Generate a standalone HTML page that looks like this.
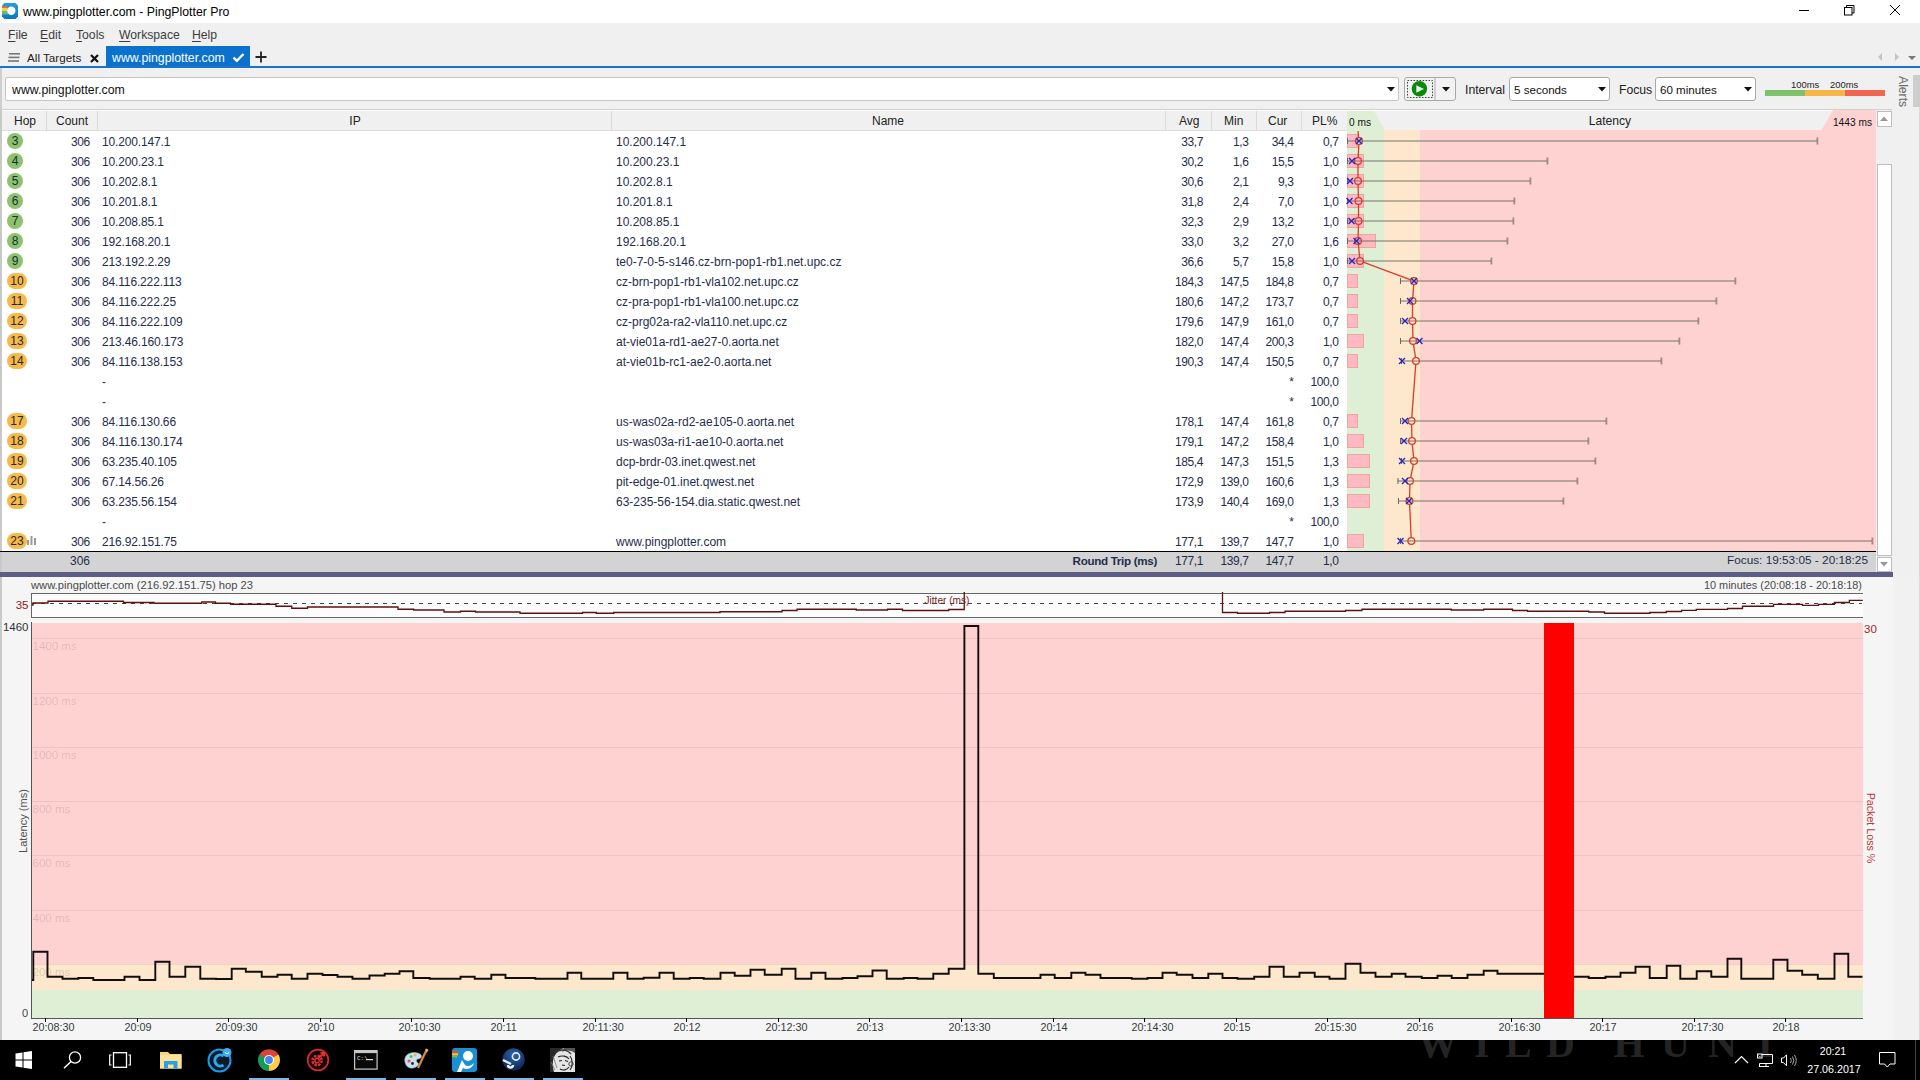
<!DOCTYPE html><html><head><meta charset="utf-8"><style>
html,body{margin:0;padding:0;width:1920px;height:1080px;overflow:hidden;background:#f0f0f0;font-family:"Liberation Sans", sans-serif;}
u{text-decoration:underline;text-underline-offset:2px}
</style></head><body>
<div style="position:absolute;left:0px;top:0px;width:1920px;height:23px;background:#fff"></div>
<svg style="position:absolute;left:2px;top:3px" width="16" height="16" viewBox="0 0 16 16">
<defs><linearGradient id="icg" x1="0" y1="0" x2="0" y2="1"><stop offset="0" stop-color="#1ea0e6"/><stop offset="1" stop-color="#0a76bf"/></linearGradient></defs>
<path d="M2.5 0 H13.5 L16 2.5 V13.5 L13.5 16 H2.5 L0 13.5 V2.5 Z" fill="url(#icg)"/>
<path d="M0 3 H6 L5.5 5 H0 Z" fill="#e2702e"/><path d="M0 5 H5.5 L5.3 8.5 H0 Z" fill="#f2d22e"/><path d="M0 8.5 H5.3 L6.5 11.5 H0 Z" fill="#5cbf84"/>
<circle cx="9.3" cy="7.7" r="4.2" fill="#fff"/>
</svg>
<div style="position:absolute;left:23px;top:5px;font-size:12.3px;line-height:14.3px;color:#000;white-space:nowrap;">www.pingplotter.com - PingPlotter Pro</div>
<div style="position:absolute;left:1799px;top:10px;width:10px;height:1px;background:#000"></div>
<svg style="position:absolute;left:1844px;top:5px" width="11" height="11" viewBox="0 0 11 11">
<rect x="0.5" y="2.5" width="7.5" height="7.5" fill="none" stroke="#000" stroke-width="1"/>
<path d="M2.5 2.5 V0.5 H10 V8 H8" fill="none" stroke="#000" stroke-width="1"/></svg>
<svg style="position:absolute;left:1890px;top:5px" width="10" height="10" viewBox="0 0 10 10">
<path d="M0 0 L10 10 M10 0 L0 10" stroke="#000" stroke-width="1"/></svg>
<div style="position:absolute;left:0px;top:23px;width:1920px;height:45px;background:#f0f0f0"></div>
<div style="position:absolute;left:8px;top:28px;font-size:12.2px;line-height:14.2px;color:#3c3c3c;white-space:nowrap;"><u>F</u>ile</div>
<div style="position:absolute;left:40px;top:28px;font-size:12.2px;line-height:14.2px;color:#3c3c3c;white-space:nowrap;"><u>E</u>dit</div>
<div style="position:absolute;left:76px;top:28px;font-size:12.2px;line-height:14.2px;color:#3c3c3c;white-space:nowrap;"><u>T</u>ools</div>
<div style="position:absolute;left:119px;top:28px;font-size:12.2px;line-height:14.2px;color:#3c3c3c;white-space:nowrap;"><u>W</u>orkspace</div>
<div style="position:absolute;left:192px;top:28px;font-size:12.2px;line-height:14.2px;color:#3c3c3c;white-space:nowrap;"><u>H</u>elp</div>
<svg style="position:absolute;left:8px;top:53px" width="13" height="10" viewBox="0 0 13 10">
<rect x="1" y="0" width="11" height="1.6" fill="#777"/><rect x="0.5" y="3.6" width="11" height="1.6" fill="#777"/><rect x="0" y="7.2" width="11" height="1.6" fill="#777"/></svg>
<div style="position:absolute;left:27px;top:51px;font-size:11.7px;line-height:13.7px;color:#222;white-space:nowrap;">All Targets</div>
<svg style="position:absolute;left:90px;top:54px" width="9" height="9" viewBox="0 0 9 9">
<path d="M1 1 L8 8 M8 1 L1 8" stroke="#111" stroke-width="2.2"/></svg>
<div style="position:absolute;left:106px;top:46px;width:144px;height:20px;background:#0a72cc"></div>
<div style="position:absolute;left:112px;top:51px;font-size:12.3px;line-height:14.3px;color:#fff;white-space:nowrap;">www.pingplotter.com</div>
<svg style="position:absolute;left:232px;top:52px" width="13" height="11" viewBox="0 0 13 11">
<path d="M1.5 5.5 L4.8 8.8 L11.5 2" fill="none" stroke="#fff" stroke-width="2.4"/></svg>
<svg style="position:absolute;left:255px;top:51px" width="12" height="12" viewBox="0 0 12 12">
<path d="M6 0.5 V11.5 M0.5 6 H11.5" stroke="#222" stroke-width="1.8"/></svg>
<div style="position:absolute;left:0px;top:66px;width:1920px;height:2px;background:#1a73c8"></div>
<svg style="position:absolute;left:1876px;top:52px" width="44" height="10" viewBox="0 0 44 10">
<path d="M6 1 L2 5 L6 9 Z" fill="#c4c4c4"/><path d="M19 1 L23 5 L19 9 Z" fill="#c4c4c4"/>
<path d="M32 4 L40 4 L36 8 Z" fill="#777"/></svg>
<div style="position:absolute;left:0px;top:68px;width:1920px;height:42px;background:#f0f0f0"></div>
<div style="position:absolute;left:5px;top:77px;width:1394px;height:24px;background:#fff;border:1px solid #c5c5c5;box-sizing:border-box;border-radius:2px"></div>
<div style="position:absolute;left:12px;top:83px;font-size:12.3px;line-height:14.3px;color:#111;white-space:nowrap;">www.pingplotter.com</div>
<div style="position:absolute;left:0px;top:68px;width:2px;height:42px;background:#cfcfcf"></div>
<svg style="position:absolute;left:1387px;top:87px" width="9" height="5" viewBox="0 0 9 5"><path d="M0 0 H8 L4 4.5 Z" fill="#111"/></svg>
<div style="position:absolute;left:1404px;top:77px;width:52px;height:24px;background:#f2f2f2;border:1px solid #a8a8a8;box-sizing:border-box;border-radius:3px"></div>
<div style="position:absolute;left:1434px;top:78px;width:2px;height:22px;background:#cfcfcf"></div>
<svg style="position:absolute;left:1404px;top:77px" width="32" height="24" viewBox="0 0 32 24">
<rect x="3.5" y="3.5" width="25" height="17" fill="none" stroke="#444" stroke-width="1" stroke-dasharray="1.6 1.4"/>
<circle cx="15.4" cy="11.7" r="7.7" fill="#0a8a0a"/>
<path d="M12.3 8.2 L20 11.9 L12.3 15.7 Z" fill="#e6f6e6"/></svg>
<svg style="position:absolute;left:1442px;top:87px" width="9" height="5" viewBox="0 0 9 5"><path d="M0 0 H8 L4 4.5 Z" fill="#111"/></svg>
<div style="position:absolute;left:1465px;top:83px;font-size:12.2px;line-height:14.2px;color:#222;white-space:nowrap;">Interval</div>
<div style="position:absolute;left:1509px;top:77px;width:101px;height:24px;background:#fff;border:1px solid #a8a8a8;box-sizing:border-box;border-radius:3px"></div>
<div style="position:absolute;left:1514px;top:83px;font-size:11.6px;line-height:13.6px;color:#111;white-space:nowrap;">5 seconds</div>
<svg style="position:absolute;left:1598px;top:87px" width="9" height="5" viewBox="0 0 9 5"><path d="M0 0 H8 L4 4.5 Z" fill="#111"/></svg>
<div style="position:absolute;left:1619px;top:83px;font-size:12.2px;line-height:14.2px;color:#222;white-space:nowrap;">Focus</div>
<div style="position:absolute;left:1655px;top:77px;width:101px;height:24px;background:#fff;border:1px solid #a8a8a8;box-sizing:border-box;border-radius:3px"></div>
<div style="position:absolute;left:1660px;top:83px;font-size:11.6px;line-height:13.6px;color:#111;white-space:nowrap;">60 minutes</div>
<svg style="position:absolute;left:1744px;top:87px" width="9" height="5" viewBox="0 0 9 5"><path d="M0 0 H8 L4 4.5 Z" fill="#111"/></svg>
<div style="position:absolute;left:1765px;top:90px;width:40px;height:6px;background:#7fc06a"></div>
<div style="position:absolute;left:1805px;top:90px;width:40px;height:6px;background:#f7b54a"></div>
<div style="position:absolute;left:1845px;top:90px;width:40px;height:6px;background:#f06650"></div>
<div style="position:absolute;left:1791px;top:78.5px;font-size:9.4px;line-height:11.4px;color:#222;white-space:nowrap;">100ms</div>
<div style="position:absolute;left:1830px;top:78.5px;font-size:9.4px;line-height:11.4px;color:#222;white-space:nowrap;">200ms</div>
<div style="position:absolute;left:1889px;top:83.5px;width:28px;height:12px;transform:rotate(90deg);font-size:12.2px;line-height:12px;color:#6a6a6a;text-align:center;white-space:nowrap">Alerts</div>
<div style="position:absolute;left:1913px;top:75px;width:7px;height:32px;background:#cdcdcd"></div>
<div style="position:absolute;left:0px;top:109px;width:1892px;height:2px;background:#d0d0d0"></div>
<div style="position:absolute;left:0px;top:110px;width:1877px;height:441px;background:#fff"></div>
<div style="position:absolute;left:0px;top:111px;width:1877px;height:19px;background:#f0f0f0"></div>
<div style="position:absolute;left:0px;top:130px;width:1347px;height:1px;background:#dcdcdc"></div>
<div style="position:absolute;left:0px;top:110px;width:2px;height:462px;background:#c9c9c9"></div>
<div style="position:absolute;left:46px;top:111px;width:1px;height:19px;background:#d9d9d9"></div>
<div style="position:absolute;left:97px;top:111px;width:1px;height:19px;background:#d9d9d9"></div>
<div style="position:absolute;left:611px;top:111px;width:1px;height:19px;background:#d9d9d9"></div>
<div style="position:absolute;left:1165px;top:111px;width:1px;height:19px;background:#d9d9d9"></div>
<div style="position:absolute;left:1211px;top:111px;width:1px;height:19px;background:#d9d9d9"></div>
<div style="position:absolute;left:1256px;top:111px;width:1px;height:19px;background:#d9d9d9"></div>
<div style="position:absolute;left:1301px;top:111px;width:1px;height:19px;background:#d9d9d9"></div>
<div style="position:absolute;left:14px;top:113.7px;font-size:12px;line-height:14px;color:#222;white-space:nowrap;">Hop</div>
<div style="position:absolute;left:56px;top:113.7px;font-size:12px;line-height:14px;color:#222;white-space:nowrap;">Count</div>
<div style="position:absolute;left:155px;width:400px;top:113.7px;font-size:12px;line-height:14px;color:#222;white-space:nowrap;text-align:center;">IP</div>
<div style="position:absolute;left:688px;width:400px;top:113.7px;font-size:12px;line-height:14px;color:#222;white-space:nowrap;text-align:center;">Name</div>
<div style="position:absolute;left:1179px;top:113.7px;font-size:12px;line-height:14px;color:#222;white-space:nowrap;">Avg</div>
<div style="position:absolute;left:1224px;top:113.7px;font-size:12px;line-height:14px;color:#222;white-space:nowrap;">Min</div>
<div style="position:absolute;left:1268px;top:113.7px;font-size:12px;line-height:14px;color:#222;white-space:nowrap;">Cur</div>
<div style="position:absolute;left:1312px;top:113.7px;font-size:12px;line-height:14px;color:#222;white-space:nowrap;">PL%</div>
<div style="position:absolute;left:1347px;top:130px;width:37px;height:421px;background:#dfefd5"></div>
<div style="position:absolute;left:1384px;top:130px;width:36px;height:421px;background:#fde8cd"></div>
<div style="position:absolute;left:1420px;top:130px;width:456px;height:421px;background:#ffd2d2"></div>
<svg style="position:absolute;left:1347px;top:110px" width="529" height="21" viewBox="0 0 529 21">
<polygon points="0,1 27,1 37,18 37,21 0,21" fill="#dfefd5"/>
<polygon points="37,8 37,21 73,21 73,19 50,19" fill="#fde8cd" opacity="0"/>
<polygon points="529,0 486,0 474,21 529,21" fill="#ffd2d2"/>
</svg>
<div style="position:absolute;left:1349px;top:116.5px;font-size:10.2px;line-height:12.2px;color:#111;white-space:nowrap;">0 ms</div>
<div style="position:absolute;left:1410px;width:400px;top:113.5px;font-size:12.1px;line-height:14.1px;color:#222;white-space:nowrap;text-align:center;">Latency</div>
<div style="position:absolute;right:48px;top:117px;font-size:10.2px;line-height:12.2px;color:#111;white-space:nowrap;text-align:right;">1443 ms</div>
<div style="position:absolute;left:7px;top:133px;width:16px;height:16px;border-radius:8px;background:#8dc26f;font-size:12px;line-height:16px;text-align:center;color:#1d2a36">3</div>
<div style="position:absolute;right:1830px;top:134.8px;font-size:12px;line-height:14px;color:#1f2d4d;white-space:nowrap;text-align:right;letter-spacing:-0.3px">306</div>
<div style="position:absolute;left:102px;top:134.8px;font-size:12px;line-height:14px;color:#1f2d4d;white-space:nowrap;letter-spacing:-0.15px">10.200.147.1</div>
<div style="position:absolute;left:616px;top:134.8px;font-size:12px;line-height:14px;color:#1f2d4d;white-space:nowrap;">10.200.147.1</div>
<div style="position:absolute;right:717px;top:134.8px;font-size:12px;line-height:14px;color:#1f2d4d;white-space:nowrap;text-align:right;letter-spacing:-0.4px">33,7</div>
<div style="position:absolute;right:671.5px;top:134.8px;font-size:12px;line-height:14px;color:#1f2d4d;white-space:nowrap;text-align:right;letter-spacing:-0.4px">1,3</div>
<div style="position:absolute;right:626.5px;top:134.8px;font-size:12px;line-height:14px;color:#1f2d4d;white-space:nowrap;text-align:right;letter-spacing:-0.4px">34,4</div>
<div style="position:absolute;right:581.5px;top:134.8px;font-size:12px;line-height:14px;color:#1f2d4d;white-space:nowrap;text-align:right;letter-spacing:-0.4px">0,7</div>
<div style="position:absolute;left:7px;top:153px;width:16px;height:16px;border-radius:8px;background:#8dc26f;font-size:12px;line-height:16px;text-align:center;color:#1d2a36">4</div>
<div style="position:absolute;right:1830px;top:154.8px;font-size:12px;line-height:14px;color:#1f2d4d;white-space:nowrap;text-align:right;letter-spacing:-0.3px">306</div>
<div style="position:absolute;left:102px;top:154.8px;font-size:12px;line-height:14px;color:#1f2d4d;white-space:nowrap;letter-spacing:-0.15px">10.200.23.1</div>
<div style="position:absolute;left:616px;top:154.8px;font-size:12px;line-height:14px;color:#1f2d4d;white-space:nowrap;">10.200.23.1</div>
<div style="position:absolute;right:717px;top:154.8px;font-size:12px;line-height:14px;color:#1f2d4d;white-space:nowrap;text-align:right;letter-spacing:-0.4px">30,2</div>
<div style="position:absolute;right:671.5px;top:154.8px;font-size:12px;line-height:14px;color:#1f2d4d;white-space:nowrap;text-align:right;letter-spacing:-0.4px">1,6</div>
<div style="position:absolute;right:626.5px;top:154.8px;font-size:12px;line-height:14px;color:#1f2d4d;white-space:nowrap;text-align:right;letter-spacing:-0.4px">15,5</div>
<div style="position:absolute;right:581.5px;top:154.8px;font-size:12px;line-height:14px;color:#1f2d4d;white-space:nowrap;text-align:right;letter-spacing:-0.4px">1,0</div>
<div style="position:absolute;left:7px;top:173px;width:16px;height:16px;border-radius:8px;background:#8dc26f;font-size:12px;line-height:16px;text-align:center;color:#1d2a36">5</div>
<div style="position:absolute;right:1830px;top:174.8px;font-size:12px;line-height:14px;color:#1f2d4d;white-space:nowrap;text-align:right;letter-spacing:-0.3px">306</div>
<div style="position:absolute;left:102px;top:174.8px;font-size:12px;line-height:14px;color:#1f2d4d;white-space:nowrap;letter-spacing:-0.15px">10.202.8.1</div>
<div style="position:absolute;left:616px;top:174.8px;font-size:12px;line-height:14px;color:#1f2d4d;white-space:nowrap;">10.202.8.1</div>
<div style="position:absolute;right:717px;top:174.8px;font-size:12px;line-height:14px;color:#1f2d4d;white-space:nowrap;text-align:right;letter-spacing:-0.4px">30,6</div>
<div style="position:absolute;right:671.5px;top:174.8px;font-size:12px;line-height:14px;color:#1f2d4d;white-space:nowrap;text-align:right;letter-spacing:-0.4px">2,1</div>
<div style="position:absolute;right:626.5px;top:174.8px;font-size:12px;line-height:14px;color:#1f2d4d;white-space:nowrap;text-align:right;letter-spacing:-0.4px">9,3</div>
<div style="position:absolute;right:581.5px;top:174.8px;font-size:12px;line-height:14px;color:#1f2d4d;white-space:nowrap;text-align:right;letter-spacing:-0.4px">1,0</div>
<div style="position:absolute;left:7px;top:193px;width:16px;height:16px;border-radius:8px;background:#8dc26f;font-size:12px;line-height:16px;text-align:center;color:#1d2a36">6</div>
<div style="position:absolute;right:1830px;top:194.8px;font-size:12px;line-height:14px;color:#1f2d4d;white-space:nowrap;text-align:right;letter-spacing:-0.3px">306</div>
<div style="position:absolute;left:102px;top:194.8px;font-size:12px;line-height:14px;color:#1f2d4d;white-space:nowrap;letter-spacing:-0.15px">10.201.8.1</div>
<div style="position:absolute;left:616px;top:194.8px;font-size:12px;line-height:14px;color:#1f2d4d;white-space:nowrap;">10.201.8.1</div>
<div style="position:absolute;right:717px;top:194.8px;font-size:12px;line-height:14px;color:#1f2d4d;white-space:nowrap;text-align:right;letter-spacing:-0.4px">31,8</div>
<div style="position:absolute;right:671.5px;top:194.8px;font-size:12px;line-height:14px;color:#1f2d4d;white-space:nowrap;text-align:right;letter-spacing:-0.4px">2,4</div>
<div style="position:absolute;right:626.5px;top:194.8px;font-size:12px;line-height:14px;color:#1f2d4d;white-space:nowrap;text-align:right;letter-spacing:-0.4px">7,0</div>
<div style="position:absolute;right:581.5px;top:194.8px;font-size:12px;line-height:14px;color:#1f2d4d;white-space:nowrap;text-align:right;letter-spacing:-0.4px">1,0</div>
<div style="position:absolute;left:7px;top:213px;width:16px;height:16px;border-radius:8px;background:#8dc26f;font-size:12px;line-height:16px;text-align:center;color:#1d2a36">7</div>
<div style="position:absolute;right:1830px;top:214.8px;font-size:12px;line-height:14px;color:#1f2d4d;white-space:nowrap;text-align:right;letter-spacing:-0.3px">306</div>
<div style="position:absolute;left:102px;top:214.8px;font-size:12px;line-height:14px;color:#1f2d4d;white-space:nowrap;letter-spacing:-0.15px">10.208.85.1</div>
<div style="position:absolute;left:616px;top:214.8px;font-size:12px;line-height:14px;color:#1f2d4d;white-space:nowrap;">10.208.85.1</div>
<div style="position:absolute;right:717px;top:214.8px;font-size:12px;line-height:14px;color:#1f2d4d;white-space:nowrap;text-align:right;letter-spacing:-0.4px">32,3</div>
<div style="position:absolute;right:671.5px;top:214.8px;font-size:12px;line-height:14px;color:#1f2d4d;white-space:nowrap;text-align:right;letter-spacing:-0.4px">2,9</div>
<div style="position:absolute;right:626.5px;top:214.8px;font-size:12px;line-height:14px;color:#1f2d4d;white-space:nowrap;text-align:right;letter-spacing:-0.4px">13,2</div>
<div style="position:absolute;right:581.5px;top:214.8px;font-size:12px;line-height:14px;color:#1f2d4d;white-space:nowrap;text-align:right;letter-spacing:-0.4px">1,0</div>
<div style="position:absolute;left:7px;top:233px;width:16px;height:16px;border-radius:8px;background:#8dc26f;font-size:12px;line-height:16px;text-align:center;color:#1d2a36">8</div>
<div style="position:absolute;right:1830px;top:234.8px;font-size:12px;line-height:14px;color:#1f2d4d;white-space:nowrap;text-align:right;letter-spacing:-0.3px">306</div>
<div style="position:absolute;left:102px;top:234.8px;font-size:12px;line-height:14px;color:#1f2d4d;white-space:nowrap;letter-spacing:-0.15px">192.168.20.1</div>
<div style="position:absolute;left:616px;top:234.8px;font-size:12px;line-height:14px;color:#1f2d4d;white-space:nowrap;">192.168.20.1</div>
<div style="position:absolute;right:717px;top:234.8px;font-size:12px;line-height:14px;color:#1f2d4d;white-space:nowrap;text-align:right;letter-spacing:-0.4px">33,0</div>
<div style="position:absolute;right:671.5px;top:234.8px;font-size:12px;line-height:14px;color:#1f2d4d;white-space:nowrap;text-align:right;letter-spacing:-0.4px">3,2</div>
<div style="position:absolute;right:626.5px;top:234.8px;font-size:12px;line-height:14px;color:#1f2d4d;white-space:nowrap;text-align:right;letter-spacing:-0.4px">27,0</div>
<div style="position:absolute;right:581.5px;top:234.8px;font-size:12px;line-height:14px;color:#1f2d4d;white-space:nowrap;text-align:right;letter-spacing:-0.4px">1,6</div>
<div style="position:absolute;left:7px;top:253px;width:16px;height:16px;border-radius:8px;background:#8dc26f;font-size:12px;line-height:16px;text-align:center;color:#1d2a36">9</div>
<div style="position:absolute;right:1830px;top:254.8px;font-size:12px;line-height:14px;color:#1f2d4d;white-space:nowrap;text-align:right;letter-spacing:-0.3px">306</div>
<div style="position:absolute;left:102px;top:254.8px;font-size:12px;line-height:14px;color:#1f2d4d;white-space:nowrap;letter-spacing:-0.15px">213.192.2.29</div>
<div style="position:absolute;left:616px;top:254.8px;font-size:12px;line-height:14px;color:#1f2d4d;white-space:nowrap;">te0-7-0-5-s146.cz-brn-pop1-rb1.net.upc.cz</div>
<div style="position:absolute;right:717px;top:254.8px;font-size:12px;line-height:14px;color:#1f2d4d;white-space:nowrap;text-align:right;letter-spacing:-0.4px">36,6</div>
<div style="position:absolute;right:671.5px;top:254.8px;font-size:12px;line-height:14px;color:#1f2d4d;white-space:nowrap;text-align:right;letter-spacing:-0.4px">5,7</div>
<div style="position:absolute;right:626.5px;top:254.8px;font-size:12px;line-height:14px;color:#1f2d4d;white-space:nowrap;text-align:right;letter-spacing:-0.4px">15,8</div>
<div style="position:absolute;right:581.5px;top:254.8px;font-size:12px;line-height:14px;color:#1f2d4d;white-space:nowrap;text-align:right;letter-spacing:-0.4px">1,0</div>
<div style="position:absolute;left:7px;top:273px;width:20px;height:16px;border-radius:8px;background:#f6b94a;font-size:12px;line-height:16px;text-align:center;color:#1d2a36">10</div>
<div style="position:absolute;right:1830px;top:274.8px;font-size:12px;line-height:14px;color:#1f2d4d;white-space:nowrap;text-align:right;letter-spacing:-0.3px">306</div>
<div style="position:absolute;left:102px;top:274.8px;font-size:12px;line-height:14px;color:#1f2d4d;white-space:nowrap;letter-spacing:-0.15px">84.116.222.113</div>
<div style="position:absolute;left:616px;top:274.8px;font-size:12px;line-height:14px;color:#1f2d4d;white-space:nowrap;">cz-brn-pop1-rb1-vla102.net.upc.cz</div>
<div style="position:absolute;right:717px;top:274.8px;font-size:12px;line-height:14px;color:#1f2d4d;white-space:nowrap;text-align:right;letter-spacing:-0.4px">184,3</div>
<div style="position:absolute;right:671.5px;top:274.8px;font-size:12px;line-height:14px;color:#1f2d4d;white-space:nowrap;text-align:right;letter-spacing:-0.4px">147,5</div>
<div style="position:absolute;right:626.5px;top:274.8px;font-size:12px;line-height:14px;color:#1f2d4d;white-space:nowrap;text-align:right;letter-spacing:-0.4px">184,8</div>
<div style="position:absolute;right:581.5px;top:274.8px;font-size:12px;line-height:14px;color:#1f2d4d;white-space:nowrap;text-align:right;letter-spacing:-0.4px">0,7</div>
<div style="position:absolute;left:7px;top:293px;width:20px;height:16px;border-radius:8px;background:#f6b94a;font-size:12px;line-height:16px;text-align:center;color:#1d2a36">11</div>
<div style="position:absolute;right:1830px;top:294.8px;font-size:12px;line-height:14px;color:#1f2d4d;white-space:nowrap;text-align:right;letter-spacing:-0.3px">306</div>
<div style="position:absolute;left:102px;top:294.8px;font-size:12px;line-height:14px;color:#1f2d4d;white-space:nowrap;letter-spacing:-0.15px">84.116.222.25</div>
<div style="position:absolute;left:616px;top:294.8px;font-size:12px;line-height:14px;color:#1f2d4d;white-space:nowrap;">cz-pra-pop1-rb1-vla100.net.upc.cz</div>
<div style="position:absolute;right:717px;top:294.8px;font-size:12px;line-height:14px;color:#1f2d4d;white-space:nowrap;text-align:right;letter-spacing:-0.4px">180,6</div>
<div style="position:absolute;right:671.5px;top:294.8px;font-size:12px;line-height:14px;color:#1f2d4d;white-space:nowrap;text-align:right;letter-spacing:-0.4px">147,2</div>
<div style="position:absolute;right:626.5px;top:294.8px;font-size:12px;line-height:14px;color:#1f2d4d;white-space:nowrap;text-align:right;letter-spacing:-0.4px">173,7</div>
<div style="position:absolute;right:581.5px;top:294.8px;font-size:12px;line-height:14px;color:#1f2d4d;white-space:nowrap;text-align:right;letter-spacing:-0.4px">0,7</div>
<div style="position:absolute;left:7px;top:313px;width:20px;height:16px;border-radius:8px;background:#f6b94a;font-size:12px;line-height:16px;text-align:center;color:#1d2a36">12</div>
<div style="position:absolute;right:1830px;top:314.8px;font-size:12px;line-height:14px;color:#1f2d4d;white-space:nowrap;text-align:right;letter-spacing:-0.3px">306</div>
<div style="position:absolute;left:102px;top:314.8px;font-size:12px;line-height:14px;color:#1f2d4d;white-space:nowrap;letter-spacing:-0.15px">84.116.222.109</div>
<div style="position:absolute;left:616px;top:314.8px;font-size:12px;line-height:14px;color:#1f2d4d;white-space:nowrap;">cz-prg02a-ra2-vla110.net.upc.cz</div>
<div style="position:absolute;right:717px;top:314.8px;font-size:12px;line-height:14px;color:#1f2d4d;white-space:nowrap;text-align:right;letter-spacing:-0.4px">179,6</div>
<div style="position:absolute;right:671.5px;top:314.8px;font-size:12px;line-height:14px;color:#1f2d4d;white-space:nowrap;text-align:right;letter-spacing:-0.4px">147,9</div>
<div style="position:absolute;right:626.5px;top:314.8px;font-size:12px;line-height:14px;color:#1f2d4d;white-space:nowrap;text-align:right;letter-spacing:-0.4px">161,0</div>
<div style="position:absolute;right:581.5px;top:314.8px;font-size:12px;line-height:14px;color:#1f2d4d;white-space:nowrap;text-align:right;letter-spacing:-0.4px">0,7</div>
<div style="position:absolute;left:7px;top:333px;width:20px;height:16px;border-radius:8px;background:#f6b94a;font-size:12px;line-height:16px;text-align:center;color:#1d2a36">13</div>
<div style="position:absolute;right:1830px;top:334.8px;font-size:12px;line-height:14px;color:#1f2d4d;white-space:nowrap;text-align:right;letter-spacing:-0.3px">306</div>
<div style="position:absolute;left:102px;top:334.8px;font-size:12px;line-height:14px;color:#1f2d4d;white-space:nowrap;letter-spacing:-0.15px">213.46.160.173</div>
<div style="position:absolute;left:616px;top:334.8px;font-size:12px;line-height:14px;color:#1f2d4d;white-space:nowrap;">at-vie01a-rd1-ae27-0.aorta.net</div>
<div style="position:absolute;right:717px;top:334.8px;font-size:12px;line-height:14px;color:#1f2d4d;white-space:nowrap;text-align:right;letter-spacing:-0.4px">182,0</div>
<div style="position:absolute;right:671.5px;top:334.8px;font-size:12px;line-height:14px;color:#1f2d4d;white-space:nowrap;text-align:right;letter-spacing:-0.4px">147,4</div>
<div style="position:absolute;right:626.5px;top:334.8px;font-size:12px;line-height:14px;color:#1f2d4d;white-space:nowrap;text-align:right;letter-spacing:-0.4px">200,3</div>
<div style="position:absolute;right:581.5px;top:334.8px;font-size:12px;line-height:14px;color:#1f2d4d;white-space:nowrap;text-align:right;letter-spacing:-0.4px">1,0</div>
<div style="position:absolute;left:7px;top:353px;width:20px;height:16px;border-radius:8px;background:#f6b94a;font-size:12px;line-height:16px;text-align:center;color:#1d2a36">14</div>
<div style="position:absolute;right:1830px;top:354.8px;font-size:12px;line-height:14px;color:#1f2d4d;white-space:nowrap;text-align:right;letter-spacing:-0.3px">306</div>
<div style="position:absolute;left:102px;top:354.8px;font-size:12px;line-height:14px;color:#1f2d4d;white-space:nowrap;letter-spacing:-0.15px">84.116.138.153</div>
<div style="position:absolute;left:616px;top:354.8px;font-size:12px;line-height:14px;color:#1f2d4d;white-space:nowrap;">at-vie01b-rc1-ae2-0.aorta.net</div>
<div style="position:absolute;right:717px;top:354.8px;font-size:12px;line-height:14px;color:#1f2d4d;white-space:nowrap;text-align:right;letter-spacing:-0.4px">190,3</div>
<div style="position:absolute;right:671.5px;top:354.8px;font-size:12px;line-height:14px;color:#1f2d4d;white-space:nowrap;text-align:right;letter-spacing:-0.4px">147,4</div>
<div style="position:absolute;right:626.5px;top:354.8px;font-size:12px;line-height:14px;color:#1f2d4d;white-space:nowrap;text-align:right;letter-spacing:-0.4px">150,5</div>
<div style="position:absolute;right:581.5px;top:354.8px;font-size:12px;line-height:14px;color:#1f2d4d;white-space:nowrap;text-align:right;letter-spacing:-0.4px">0,7</div>
<div style="position:absolute;left:102px;top:374.8px;font-size:12px;line-height:14px;color:#1f2d4d;white-space:nowrap;letter-spacing:-0.15px">-</div>
<div style="position:absolute;left:616px;top:374.8px;font-size:12px;line-height:14px;color:#1f2d4d;white-space:nowrap;"></div>
<div style="position:absolute;right:717px;top:374.8px;font-size:12px;line-height:14px;color:#1f2d4d;white-space:nowrap;text-align:right;letter-spacing:-0.4px"></div>
<div style="position:absolute;right:671.5px;top:374.8px;font-size:12px;line-height:14px;color:#1f2d4d;white-space:nowrap;text-align:right;letter-spacing:-0.4px"></div>
<div style="position:absolute;right:626.5px;top:374.8px;font-size:12px;line-height:14px;color:#1f2d4d;white-space:nowrap;text-align:right;letter-spacing:-0.4px">*</div>
<div style="position:absolute;right:581.5px;top:374.8px;font-size:12px;line-height:14px;color:#1f2d4d;white-space:nowrap;text-align:right;letter-spacing:-0.4px">100,0</div>
<div style="position:absolute;left:102px;top:394.8px;font-size:12px;line-height:14px;color:#1f2d4d;white-space:nowrap;letter-spacing:-0.15px">-</div>
<div style="position:absolute;left:616px;top:394.8px;font-size:12px;line-height:14px;color:#1f2d4d;white-space:nowrap;"></div>
<div style="position:absolute;right:717px;top:394.8px;font-size:12px;line-height:14px;color:#1f2d4d;white-space:nowrap;text-align:right;letter-spacing:-0.4px"></div>
<div style="position:absolute;right:671.5px;top:394.8px;font-size:12px;line-height:14px;color:#1f2d4d;white-space:nowrap;text-align:right;letter-spacing:-0.4px"></div>
<div style="position:absolute;right:626.5px;top:394.8px;font-size:12px;line-height:14px;color:#1f2d4d;white-space:nowrap;text-align:right;letter-spacing:-0.4px">*</div>
<div style="position:absolute;right:581.5px;top:394.8px;font-size:12px;line-height:14px;color:#1f2d4d;white-space:nowrap;text-align:right;letter-spacing:-0.4px">100,0</div>
<div style="position:absolute;left:7px;top:413px;width:20px;height:16px;border-radius:8px;background:#f6b94a;font-size:12px;line-height:16px;text-align:center;color:#1d2a36">17</div>
<div style="position:absolute;right:1830px;top:414.8px;font-size:12px;line-height:14px;color:#1f2d4d;white-space:nowrap;text-align:right;letter-spacing:-0.3px">306</div>
<div style="position:absolute;left:102px;top:414.8px;font-size:12px;line-height:14px;color:#1f2d4d;white-space:nowrap;letter-spacing:-0.15px">84.116.130.66</div>
<div style="position:absolute;left:616px;top:414.8px;font-size:12px;line-height:14px;color:#1f2d4d;white-space:nowrap;">us-was02a-rd2-ae105-0.aorta.net</div>
<div style="position:absolute;right:717px;top:414.8px;font-size:12px;line-height:14px;color:#1f2d4d;white-space:nowrap;text-align:right;letter-spacing:-0.4px">178,1</div>
<div style="position:absolute;right:671.5px;top:414.8px;font-size:12px;line-height:14px;color:#1f2d4d;white-space:nowrap;text-align:right;letter-spacing:-0.4px">147,4</div>
<div style="position:absolute;right:626.5px;top:414.8px;font-size:12px;line-height:14px;color:#1f2d4d;white-space:nowrap;text-align:right;letter-spacing:-0.4px">161,8</div>
<div style="position:absolute;right:581.5px;top:414.8px;font-size:12px;line-height:14px;color:#1f2d4d;white-space:nowrap;text-align:right;letter-spacing:-0.4px">0,7</div>
<div style="position:absolute;left:7px;top:433px;width:20px;height:16px;border-radius:8px;background:#f6b94a;font-size:12px;line-height:16px;text-align:center;color:#1d2a36">18</div>
<div style="position:absolute;right:1830px;top:434.8px;font-size:12px;line-height:14px;color:#1f2d4d;white-space:nowrap;text-align:right;letter-spacing:-0.3px">306</div>
<div style="position:absolute;left:102px;top:434.8px;font-size:12px;line-height:14px;color:#1f2d4d;white-space:nowrap;letter-spacing:-0.15px">84.116.130.174</div>
<div style="position:absolute;left:616px;top:434.8px;font-size:12px;line-height:14px;color:#1f2d4d;white-space:nowrap;">us-was03a-ri1-ae10-0.aorta.net</div>
<div style="position:absolute;right:717px;top:434.8px;font-size:12px;line-height:14px;color:#1f2d4d;white-space:nowrap;text-align:right;letter-spacing:-0.4px">179,1</div>
<div style="position:absolute;right:671.5px;top:434.8px;font-size:12px;line-height:14px;color:#1f2d4d;white-space:nowrap;text-align:right;letter-spacing:-0.4px">147,2</div>
<div style="position:absolute;right:626.5px;top:434.8px;font-size:12px;line-height:14px;color:#1f2d4d;white-space:nowrap;text-align:right;letter-spacing:-0.4px">158,4</div>
<div style="position:absolute;right:581.5px;top:434.8px;font-size:12px;line-height:14px;color:#1f2d4d;white-space:nowrap;text-align:right;letter-spacing:-0.4px">1,0</div>
<div style="position:absolute;left:7px;top:453px;width:20px;height:16px;border-radius:8px;background:#f6b94a;font-size:12px;line-height:16px;text-align:center;color:#1d2a36">19</div>
<div style="position:absolute;right:1830px;top:454.8px;font-size:12px;line-height:14px;color:#1f2d4d;white-space:nowrap;text-align:right;letter-spacing:-0.3px">306</div>
<div style="position:absolute;left:102px;top:454.8px;font-size:12px;line-height:14px;color:#1f2d4d;white-space:nowrap;letter-spacing:-0.15px">63.235.40.105</div>
<div style="position:absolute;left:616px;top:454.8px;font-size:12px;line-height:14px;color:#1f2d4d;white-space:nowrap;">dcp-brdr-03.inet.qwest.net</div>
<div style="position:absolute;right:717px;top:454.8px;font-size:12px;line-height:14px;color:#1f2d4d;white-space:nowrap;text-align:right;letter-spacing:-0.4px">185,4</div>
<div style="position:absolute;right:671.5px;top:454.8px;font-size:12px;line-height:14px;color:#1f2d4d;white-space:nowrap;text-align:right;letter-spacing:-0.4px">147,3</div>
<div style="position:absolute;right:626.5px;top:454.8px;font-size:12px;line-height:14px;color:#1f2d4d;white-space:nowrap;text-align:right;letter-spacing:-0.4px">151,5</div>
<div style="position:absolute;right:581.5px;top:454.8px;font-size:12px;line-height:14px;color:#1f2d4d;white-space:nowrap;text-align:right;letter-spacing:-0.4px">1,3</div>
<div style="position:absolute;left:7px;top:473px;width:20px;height:16px;border-radius:8px;background:#f6b94a;font-size:12px;line-height:16px;text-align:center;color:#1d2a36">20</div>
<div style="position:absolute;right:1830px;top:474.8px;font-size:12px;line-height:14px;color:#1f2d4d;white-space:nowrap;text-align:right;letter-spacing:-0.3px">306</div>
<div style="position:absolute;left:102px;top:474.8px;font-size:12px;line-height:14px;color:#1f2d4d;white-space:nowrap;letter-spacing:-0.15px">67.14.56.26</div>
<div style="position:absolute;left:616px;top:474.8px;font-size:12px;line-height:14px;color:#1f2d4d;white-space:nowrap;">pit-edge-01.inet.qwest.net</div>
<div style="position:absolute;right:717px;top:474.8px;font-size:12px;line-height:14px;color:#1f2d4d;white-space:nowrap;text-align:right;letter-spacing:-0.4px">172,9</div>
<div style="position:absolute;right:671.5px;top:474.8px;font-size:12px;line-height:14px;color:#1f2d4d;white-space:nowrap;text-align:right;letter-spacing:-0.4px">139,0</div>
<div style="position:absolute;right:626.5px;top:474.8px;font-size:12px;line-height:14px;color:#1f2d4d;white-space:nowrap;text-align:right;letter-spacing:-0.4px">160,6</div>
<div style="position:absolute;right:581.5px;top:474.8px;font-size:12px;line-height:14px;color:#1f2d4d;white-space:nowrap;text-align:right;letter-spacing:-0.4px">1,3</div>
<div style="position:absolute;left:7px;top:493px;width:20px;height:16px;border-radius:8px;background:#f6b94a;font-size:12px;line-height:16px;text-align:center;color:#1d2a36">21</div>
<div style="position:absolute;right:1830px;top:494.8px;font-size:12px;line-height:14px;color:#1f2d4d;white-space:nowrap;text-align:right;letter-spacing:-0.3px">306</div>
<div style="position:absolute;left:102px;top:494.8px;font-size:12px;line-height:14px;color:#1f2d4d;white-space:nowrap;letter-spacing:-0.15px">63.235.56.154</div>
<div style="position:absolute;left:616px;top:494.8px;font-size:12px;line-height:14px;color:#1f2d4d;white-space:nowrap;">63-235-56-154.dia.static.qwest.net</div>
<div style="position:absolute;right:717px;top:494.8px;font-size:12px;line-height:14px;color:#1f2d4d;white-space:nowrap;text-align:right;letter-spacing:-0.4px">173,9</div>
<div style="position:absolute;right:671.5px;top:494.8px;font-size:12px;line-height:14px;color:#1f2d4d;white-space:nowrap;text-align:right;letter-spacing:-0.4px">140,4</div>
<div style="position:absolute;right:626.5px;top:494.8px;font-size:12px;line-height:14px;color:#1f2d4d;white-space:nowrap;text-align:right;letter-spacing:-0.4px">169,0</div>
<div style="position:absolute;right:581.5px;top:494.8px;font-size:12px;line-height:14px;color:#1f2d4d;white-space:nowrap;text-align:right;letter-spacing:-0.4px">1,3</div>
<div style="position:absolute;left:102px;top:514.8px;font-size:12px;line-height:14px;color:#1f2d4d;white-space:nowrap;letter-spacing:-0.15px">-</div>
<div style="position:absolute;left:616px;top:514.8px;font-size:12px;line-height:14px;color:#1f2d4d;white-space:nowrap;"></div>
<div style="position:absolute;right:717px;top:514.8px;font-size:12px;line-height:14px;color:#1f2d4d;white-space:nowrap;text-align:right;letter-spacing:-0.4px"></div>
<div style="position:absolute;right:671.5px;top:514.8px;font-size:12px;line-height:14px;color:#1f2d4d;white-space:nowrap;text-align:right;letter-spacing:-0.4px"></div>
<div style="position:absolute;right:626.5px;top:514.8px;font-size:12px;line-height:14px;color:#1f2d4d;white-space:nowrap;text-align:right;letter-spacing:-0.4px">*</div>
<div style="position:absolute;right:581.5px;top:514.8px;font-size:12px;line-height:14px;color:#1f2d4d;white-space:nowrap;text-align:right;letter-spacing:-0.4px">100,0</div>
<div style="position:absolute;left:7px;top:533px;width:20px;height:16px;border-radius:8px;background:#f6b94a;font-size:12px;line-height:16px;text-align:center;color:#1d2a36">23</div>
<div style="position:absolute;right:1830px;top:534.8px;font-size:12px;line-height:14px;color:#1f2d4d;white-space:nowrap;text-align:right;letter-spacing:-0.3px">306</div>
<svg style="position:absolute;left:27px;top:536px" width="11" height="9" viewBox="0 0 11 9"><rect x="0" y="4" width="2" height="5" fill="#999"/><rect x="3.5" y="0" width="2" height="9" fill="#999"/><rect x="7" y="2" width="2" height="7" fill="#999"/></svg>
<div style="position:absolute;left:102px;top:534.8px;font-size:12px;line-height:14px;color:#1f2d4d;white-space:nowrap;letter-spacing:-0.15px">216.92.151.75</div>
<div style="position:absolute;left:616px;top:534.8px;font-size:12px;line-height:14px;color:#1f2d4d;white-space:nowrap;">www.pingplotter.com</div>
<div style="position:absolute;right:717px;top:534.8px;font-size:12px;line-height:14px;color:#1f2d4d;white-space:nowrap;text-align:right;letter-spacing:-0.4px">177,1</div>
<div style="position:absolute;right:671.5px;top:534.8px;font-size:12px;line-height:14px;color:#1f2d4d;white-space:nowrap;text-align:right;letter-spacing:-0.4px">139,7</div>
<div style="position:absolute;right:626.5px;top:534.8px;font-size:12px;line-height:14px;color:#1f2d4d;white-space:nowrap;text-align:right;letter-spacing:-0.4px">147,7</div>
<div style="position:absolute;right:581.5px;top:534.8px;font-size:12px;line-height:14px;color:#1f2d4d;white-space:nowrap;text-align:right;letter-spacing:-0.4px">1,0</div>
<svg style="position:absolute;left:0;top:0" width="1920" height="1080"><rect x="1347.5" y="134.5" width="10" height="13" fill="#ffb9c3" stroke="#eda59c" stroke-width="1"/><rect x="1347.5" y="154.5" width="16" height="13" fill="#ffb9c3" stroke="#eda59c" stroke-width="1"/><rect x="1347.5" y="174.5" width="16" height="13" fill="#ffb9c3" stroke="#eda59c" stroke-width="1"/><rect x="1347.5" y="194.5" width="16" height="13" fill="#ffb9c3" stroke="#eda59c" stroke-width="1"/><rect x="1347.5" y="214.5" width="16" height="13" fill="#ffb9c3" stroke="#eda59c" stroke-width="1"/><rect x="1347.5" y="234.5" width="28" height="13" fill="#ffb9c3" stroke="#eda59c" stroke-width="1"/><rect x="1347.5" y="254.5" width="16" height="13" fill="#ffb9c3" stroke="#eda59c" stroke-width="1"/><rect x="1347.5" y="274.5" width="10" height="13" fill="#ffb9c3" stroke="#eda59c" stroke-width="1"/><rect x="1347.5" y="294.5" width="10" height="13" fill="#ffb9c3" stroke="#eda59c" stroke-width="1"/><rect x="1347.5" y="314.5" width="10" height="13" fill="#ffb9c3" stroke="#eda59c" stroke-width="1"/><rect x="1347.5" y="334.5" width="16" height="13" fill="#ffb9c3" stroke="#eda59c" stroke-width="1"/><rect x="1347.5" y="354.5" width="10" height="13" fill="#ffb9c3" stroke="#eda59c" stroke-width="1"/><rect x="1347.5" y="414.5" width="10" height="13" fill="#ffb9c3" stroke="#eda59c" stroke-width="1"/><rect x="1347.5" y="434.5" width="16" height="13" fill="#ffb9c3" stroke="#eda59c" stroke-width="1"/><rect x="1347.5" y="454.5" width="22" height="13" fill="#ffb9c3" stroke="#eda59c" stroke-width="1"/><rect x="1347.5" y="474.5" width="22" height="13" fill="#ffb9c3" stroke="#eda59c" stroke-width="1"/><rect x="1347.5" y="494.5" width="22" height="13" fill="#ffb9c3" stroke="#eda59c" stroke-width="1"/><rect x="1347.5" y="534.5" width="16" height="13" fill="#ffb9c3" stroke="#eda59c" stroke-width="1"/><path d="M1358.00 131.00 L1358.66 137.62 M1358.83 144.40 L1358.17 157.60 M1358.00 164.40 L1358.00 177.60 M1358.08 184.40 L1358.42 197.60 M1358.50 204.40 L1358.50 217.60 M1358.42 224.40 L1358.08 237.60 M1358.34 244.38 L1359.66 257.62 M1363.19 262.18 L1410.81 279.82 M1413.75 284.39 L1412.75 297.61 M1412.50 304.40 L1412.50 317.60 M1412.58 324.40 L1412.92 337.60 M1413.50 344.36 L1415.50 357.64 M1415.75 364.39 L1411.75 417.61 M1411.58 424.40 L1411.92 437.60 M1412.34 444.38 L1413.66 457.62 M1413.33 464.33 L1410.67 477.67 M1409.92 484.40 L1409.58 497.60 M1409.65 504.40 L1411.15 537.60" fill="none" stroke="#e23a26" stroke-width="1.3"/><line x1="1347" y1="141" x2="1817" y2="141" stroke="rgba(105,105,90,0.45)" stroke-width="2"/><rect x="1347" y="138" width="1" height="6" fill="#666"/><rect x="1816.5" y="137.5" width="1.8" height="7" fill="rgba(110,100,100,0.65)"/><line x1="1347" y1="161" x2="1547" y2="161" stroke="rgba(105,105,90,0.45)" stroke-width="2"/><rect x="1347" y="158" width="1" height="6" fill="#666"/><rect x="1546.5" y="157.5" width="1.8" height="7" fill="rgba(110,100,100,0.65)"/><line x1="1347" y1="181" x2="1530" y2="181" stroke="rgba(105,105,90,0.45)" stroke-width="2"/><rect x="1347" y="178" width="1" height="6" fill="#666"/><rect x="1529.5" y="177.5" width="1.8" height="7" fill="rgba(110,100,100,0.65)"/><line x1="1347" y1="201" x2="1514" y2="201" stroke="rgba(105,105,90,0.45)" stroke-width="2"/><rect x="1347" y="198" width="1" height="6" fill="#666"/><rect x="1513.5" y="197.5" width="1.8" height="7" fill="rgba(110,100,100,0.65)"/><line x1="1347" y1="221" x2="1513" y2="221" stroke="rgba(105,105,90,0.45)" stroke-width="2"/><rect x="1347" y="218" width="1" height="6" fill="#666"/><rect x="1512.5" y="217.5" width="1.8" height="7" fill="rgba(110,100,100,0.65)"/><line x1="1347" y1="241" x2="1507" y2="241" stroke="rgba(105,105,90,0.45)" stroke-width="2"/><rect x="1347" y="238" width="1" height="6" fill="#666"/><rect x="1506.5" y="237.5" width="1.8" height="7" fill="rgba(110,100,100,0.65)"/><line x1="1347" y1="261" x2="1491" y2="261" stroke="rgba(105,105,90,0.45)" stroke-width="2"/><rect x="1347" y="258" width="1" height="6" fill="#666"/><rect x="1490.5" y="257.5" width="1.8" height="7" fill="rgba(110,100,100,0.65)"/><line x1="1400" y1="281" x2="1735" y2="281" stroke="rgba(105,105,90,0.45)" stroke-width="2"/><rect x="1400" y="278" width="1" height="6" fill="#666"/><rect x="1734.5" y="277.5" width="1.8" height="7" fill="rgba(110,100,100,0.65)"/><line x1="1400" y1="301" x2="1716" y2="301" stroke="rgba(105,105,90,0.45)" stroke-width="2"/><rect x="1400" y="298" width="1" height="6" fill="#666"/><rect x="1715.5" y="297.5" width="1.8" height="7" fill="rgba(110,100,100,0.65)"/><line x1="1400" y1="321" x2="1698" y2="321" stroke="rgba(105,105,90,0.45)" stroke-width="2"/><rect x="1400" y="318" width="1" height="6" fill="#666"/><rect x="1697.5" y="317.5" width="1.8" height="7" fill="rgba(110,100,100,0.65)"/><line x1="1400" y1="341" x2="1679" y2="341" stroke="rgba(105,105,90,0.45)" stroke-width="2"/><rect x="1400" y="338" width="1" height="6" fill="#666"/><rect x="1678.5" y="337.5" width="1.8" height="7" fill="rgba(110,100,100,0.65)"/><line x1="1401" y1="361" x2="1661" y2="361" stroke="rgba(105,105,90,0.45)" stroke-width="2"/><rect x="1401" y="358" width="1" height="6" fill="#666"/><rect x="1660.5" y="357.5" width="1.8" height="7" fill="rgba(110,100,100,0.65)"/><line x1="1400" y1="421" x2="1606" y2="421" stroke="rgba(105,105,90,0.45)" stroke-width="2"/><rect x="1400" y="418" width="1" height="6" fill="#666"/><rect x="1605.5" y="417.5" width="1.8" height="7" fill="rgba(110,100,100,0.65)"/><line x1="1400" y1="441" x2="1588" y2="441" stroke="rgba(105,105,90,0.45)" stroke-width="2"/><rect x="1400" y="438" width="1" height="6" fill="#666"/><rect x="1587.5" y="437.5" width="1.8" height="7" fill="rgba(110,100,100,0.65)"/><line x1="1401" y1="461" x2="1595" y2="461" stroke="rgba(105,105,90,0.45)" stroke-width="2"/><rect x="1401" y="458" width="1" height="6" fill="#666"/><rect x="1594.5" y="457.5" width="1.8" height="7" fill="rgba(110,100,100,0.65)"/><line x1="1397.5" y1="481" x2="1577" y2="481" stroke="rgba(105,105,90,0.45)" stroke-width="2"/><rect x="1397.5" y="478" width="1" height="6" fill="#666"/><rect x="1576.5" y="477.5" width="1.8" height="7" fill="rgba(110,100,100,0.65)"/><line x1="1398" y1="501" x2="1563" y2="501" stroke="rgba(105,105,90,0.45)" stroke-width="2"/><rect x="1398" y="498" width="1" height="6" fill="#666"/><rect x="1562.5" y="497.5" width="1.8" height="7" fill="rgba(110,100,100,0.65)"/><line x1="1400" y1="541" x2="1872" y2="541" stroke="rgba(105,105,90,0.45)" stroke-width="2"/><rect x="1400" y="538" width="1" height="6" fill="#666"/><rect x="1871.5" y="537.5" width="1.8" height="7" fill="rgba(110,100,100,0.65)"/><circle cx="1359" cy="141" r="3.4" fill="none" stroke="#d83a28" stroke-width="1.25"/><path d="M1356 138 L1362 144 M1362 138 L1356 144" stroke="#2424c4" stroke-width="1.35"/><circle cx="1358" cy="161" r="3.4" fill="none" stroke="#d83a28" stroke-width="1.25"/><path d="M1349 158 L1355 164 M1355 158 L1349 164" stroke="#2424c4" stroke-width="1.35"/><circle cx="1358" cy="181" r="3.4" fill="none" stroke="#d83a28" stroke-width="1.25"/><path d="M1347 178 L1353 184 M1353 178 L1347 184" stroke="#2424c4" stroke-width="1.35"/><circle cx="1358.5" cy="201" r="3.4" fill="none" stroke="#d83a28" stroke-width="1.25"/><path d="M1346.5 198 L1352.5 204 M1352.5 198 L1346.5 204" stroke="#2424c4" stroke-width="1.35"/><circle cx="1358.5" cy="221" r="3.4" fill="none" stroke="#d83a28" stroke-width="1.25"/><path d="M1348.5 218 L1354.5 224 M1354.5 218 L1348.5 224" stroke="#2424c4" stroke-width="1.35"/><circle cx="1358" cy="241" r="3.4" fill="none" stroke="#d83a28" stroke-width="1.25"/><path d="M1353.5 238 L1359.5 244 M1359.5 238 L1353.5 244" stroke="#2424c4" stroke-width="1.35"/><circle cx="1360" cy="261" r="3.4" fill="none" stroke="#d83a28" stroke-width="1.25"/><path d="M1349 258 L1355 264 M1355 258 L1349 264" stroke="#2424c4" stroke-width="1.35"/><circle cx="1414" cy="281" r="3.4" fill="none" stroke="#d83a28" stroke-width="1.25"/><path d="M1411 278 L1417 284 M1417 278 L1411 284" stroke="#2424c4" stroke-width="1.35"/><circle cx="1412.5" cy="301" r="3.4" fill="none" stroke="#d83a28" stroke-width="1.25"/><path d="M1407 298 L1413 304 M1413 298 L1407 304" stroke="#2424c4" stroke-width="1.35"/><circle cx="1412.5" cy="321" r="3.4" fill="none" stroke="#d83a28" stroke-width="1.25"/><path d="M1402 318 L1408 324 M1408 318 L1402 324" stroke="#2424c4" stroke-width="1.35"/><circle cx="1413" cy="341" r="3.4" fill="none" stroke="#d83a28" stroke-width="1.25"/><path d="M1416.5 338 L1422.5 344 M1422.5 338 L1416.5 344" stroke="#2424c4" stroke-width="1.35"/><circle cx="1416" cy="361" r="3.4" fill="none" stroke="#d83a28" stroke-width="1.25"/><path d="M1399 358 L1405 364 M1405 358 L1399 364" stroke="#2424c4" stroke-width="1.35"/><circle cx="1411.5" cy="421" r="3.4" fill="none" stroke="#d83a28" stroke-width="1.25"/><path d="M1402 418 L1408 424 M1408 418 L1402 424" stroke="#2424c4" stroke-width="1.35"/><circle cx="1412" cy="441" r="3.4" fill="none" stroke="#d83a28" stroke-width="1.25"/><path d="M1401 438 L1407 444 M1407 438 L1401 444" stroke="#2424c4" stroke-width="1.35"/><circle cx="1414" cy="461" r="3.4" fill="none" stroke="#d83a28" stroke-width="1.25"/><path d="M1399 458 L1405 464 M1405 458 L1399 464" stroke="#2424c4" stroke-width="1.35"/><circle cx="1410" cy="481" r="3.4" fill="none" stroke="#d83a28" stroke-width="1.25"/><path d="M1402 478 L1408 484 M1408 478 L1402 484" stroke="#2424c4" stroke-width="1.35"/><circle cx="1409.5" cy="501" r="3.4" fill="none" stroke="#d83a28" stroke-width="1.25"/><path d="M1406 498 L1412 504 M1412 498 L1406 504" stroke="#2424c4" stroke-width="1.35"/><circle cx="1411.3" cy="541" r="3.4" fill="none" stroke="#d83a28" stroke-width="1.25"/><path d="M1397.5 538 L1403.5 544 M1403.5 538 L1397.5 544" stroke="#2424c4" stroke-width="1.35"/></svg>
<div style="position:absolute;left:1876px;top:110px;width:16px;height:462px;background:#f0f0f0"></div>
<div style="position:absolute;left:1877px;top:111px;width:15px;height:16px;background:#fff;border:1px solid #bdbdbd;box-sizing:border-box"></div>
<svg style="position:absolute;left:1880px;top:116px" width="9" height="5" viewBox="0 0 9 5"><path d="M0 5 H8 L4 0.5 Z" fill="#999"/></svg>
<div style="position:absolute;left:1877px;top:164px;width:15px;height:392px;background:#fff;border:1px solid #bdbdbd;box-sizing:border-box"></div>
<div style="position:absolute;left:1877px;top:557px;width:15px;height:15px;background:#fff;border:1px solid #bdbdbd;box-sizing:border-box"></div>
<svg style="position:absolute;left:1880px;top:562px" width="9" height="5" viewBox="0 0 9 5"><path d="M0 0 H8 L4 4.5 Z" fill="#999"/></svg>
<div style="position:absolute;left:0px;top:551px;width:1876px;height:1px;background:#000"></div>
<div style="position:absolute;left:2px;top:552px;width:1874px;height:20px;background:#d3d3d3"></div>
<div style="position:absolute;right:1830px;top:554.2px;font-size:12px;line-height:14px;color:#1f2d4d;white-space:nowrap;text-align:right;">306</div>
<div style="position:absolute;right:763px;top:553.8px;font-size:11.6px;line-height:13.6px;color:#1f2d4d;white-space:nowrap;text-align:right;font-weight:bold;letter-spacing:-0.3px">Round Trip (ms)</div>
<div style="position:absolute;right:717px;top:554.2px;font-size:12px;line-height:14px;color:#1f2d4d;white-space:nowrap;text-align:right;letter-spacing:-0.4px">177,1</div>
<div style="position:absolute;right:671.5px;top:554.2px;font-size:12px;line-height:14px;color:#1f2d4d;white-space:nowrap;text-align:right;letter-spacing:-0.4px">139,7</div>
<div style="position:absolute;right:626.5px;top:554.2px;font-size:12px;line-height:14px;color:#1f2d4d;white-space:nowrap;text-align:right;letter-spacing:-0.4px">147,7</div>
<div style="position:absolute;right:581.5px;top:554.2px;font-size:12px;line-height:14px;color:#1f2d4d;white-space:nowrap;text-align:right;letter-spacing:-0.4px">1,0</div>
<div style="position:absolute;right:52px;top:554px;font-size:11.8px;line-height:13.8px;color:#1f2d4d;white-space:nowrap;text-align:right;">Focus: 19:53:05 - 20:18:25</div>
<div style="position:absolute;left:0px;top:572px;width:1893px;height:5px;background:#5d5d85"></div>
<div style="position:absolute;left:0px;top:577px;width:1920px;height:463px;background:#f1f1f1"></div>
<div style="position:absolute;left:0px;top:577px;width:1893px;height:463px;background:#f5f5f5"></div>
<div style="position:absolute;left:0px;top:577px;width:2px;height:463px;background:#c9c9c9"></div>
<div style="position:absolute;left:31px;top:579px;font-size:11.2px;line-height:13.2px;color:#4a4a4a;white-space:nowrap;">www.pingplotter.com (216.92.151.75) hop 23</div>
<div style="position:absolute;right:58px;top:579px;font-size:10.9px;line-height:12.9px;color:#4a4a4a;white-space:nowrap;text-align:right;">10 minutes (20:08:18 - 20:18:18)</div>
<div style="position:absolute;left:31px;top:593px;width:1832px;height:25px;background:#fcfcfc;border-top:1px solid #666;border-bottom:1px solid #666;border-left:1px solid #666;box-sizing:border-box"></div>
<div style="position:absolute;right:1891.5px;top:599px;font-size:11.5px;line-height:13.5px;color:#8b2020;white-space:nowrap;text-align:right;">35</div>
<div style="position:absolute;left:32px;top:623px;width:1831px;height:395px;background:#ffd2d2"></div>
<div style="position:absolute;left:32px;top:964px;width:1831px;height:26px;background:#fde8cd"></div>
<div style="position:absolute;left:32px;top:990px;width:1831px;height:28px;background:#dfefd5"></div>
<div style="position:absolute;left:31px;top:622px;width:1px;height:397px;background:#555"></div>
<div style="position:absolute;left:31px;top:1018px;width:1832px;height:1px;background:#555"></div>
<div style="position:absolute;left:32px;top:638px;width:1831px;height:1px;background:rgba(0,0,0,0.07)"></div>
<div style="position:absolute;left:32.5px;top:640px;font-size:11.5px;line-height:13.5px;color:rgba(0,0,0,0.14);white-space:nowrap;">1400 ms</div>
<div style="position:absolute;left:32px;top:693px;width:1831px;height:1px;background:rgba(0,0,0,0.07)"></div>
<div style="position:absolute;left:32.5px;top:695px;font-size:11.5px;line-height:13.5px;color:rgba(0,0,0,0.14);white-space:nowrap;">1200 ms</div>
<div style="position:absolute;left:32px;top:747px;width:1831px;height:1px;background:rgba(0,0,0,0.07)"></div>
<div style="position:absolute;left:32.5px;top:749px;font-size:11.5px;line-height:13.5px;color:rgba(0,0,0,0.14);white-space:nowrap;">1000 ms</div>
<div style="position:absolute;left:32px;top:801px;width:1831px;height:1px;background:rgba(0,0,0,0.07)"></div>
<div style="position:absolute;left:32.5px;top:803px;font-size:11.5px;line-height:13.5px;color:rgba(0,0,0,0.14);white-space:nowrap;">800 ms</div>
<div style="position:absolute;left:32px;top:855px;width:1831px;height:1px;background:rgba(0,0,0,0.07)"></div>
<div style="position:absolute;left:32.5px;top:857px;font-size:11.5px;line-height:13.5px;color:rgba(0,0,0,0.14);white-space:nowrap;">600 ms</div>
<div style="position:absolute;left:32px;top:910px;width:1831px;height:1px;background:rgba(0,0,0,0.07)"></div>
<div style="position:absolute;left:32.5px;top:912px;font-size:11.5px;line-height:13.5px;color:rgba(0,0,0,0.14);white-space:nowrap;">400 ms</div>
<div style="position:absolute;left:32px;top:964px;width:1831px;height:1px;background:rgba(0,0,0,0.07)"></div>
<div style="position:absolute;left:32.5px;top:966px;font-size:11.5px;line-height:13.5px;color:rgba(0,0,0,0.14);white-space:nowrap;">200 ms</div>
<div style="position:absolute;right:1891.5px;top:620.5px;font-size:11.5px;line-height:13.5px;color:#333;white-space:nowrap;text-align:right;">1460</div>
<div style="position:absolute;right:1892px;top:1007px;font-size:11px;line-height:13px;color:#444;white-space:nowrap;text-align:right;">0</div>
<div style="position:absolute;left:1864px;top:623px;font-size:11.5px;line-height:13.5px;color:#9b2a2a;white-space:nowrap;">30</div>
<div style="position:absolute;left:-27px;top:814px;width:100px;height:14px;transform:rotate(-90deg);font-size:11.05px;line-height:14px;color:#505050;text-align:center;white-space:nowrap">Latency (ms)</div>
<div style="position:absolute;left:1821px;top:821px;width:100px;height:14px;transform:rotate(90deg);font-size:10.7px;line-height:14px;color:#b83838;text-align:center;white-space:nowrap">Packet Loss %</div>
<div style="position:absolute;left:1544px;top:623px;width:30px;height:395px;background:#ff0000"></div>
<div style="position:absolute;left:45px;top:1018px;width:1px;height:4px;background:#000"></div>
<div style="position:absolute;left:32.5px;top:1021px;font-size:10.8px;line-height:12.8px;color:#2f3d38;white-space:nowrap;">20:08:30</div>
<div style="position:absolute;left:137px;top:1018px;width:1px;height:4px;background:#000"></div>
<div style="position:absolute;left:124.5px;top:1021px;font-size:10.8px;line-height:12.8px;color:#2f3d38;white-space:nowrap;">20:09</div>
<div style="position:absolute;left:228px;top:1018px;width:1px;height:4px;background:#000"></div>
<div style="position:absolute;left:215.5px;top:1021px;font-size:10.8px;line-height:12.8px;color:#2f3d38;white-space:nowrap;">20:09:30</div>
<div style="position:absolute;left:320px;top:1018px;width:1px;height:4px;background:#000"></div>
<div style="position:absolute;left:307.5px;top:1021px;font-size:10.8px;line-height:12.8px;color:#2f3d38;white-space:nowrap;">20:10</div>
<div style="position:absolute;left:411px;top:1018px;width:1px;height:4px;background:#000"></div>
<div style="position:absolute;left:398.5px;top:1021px;font-size:10.8px;line-height:12.8px;color:#2f3d38;white-space:nowrap;">20:10:30</div>
<div style="position:absolute;left:503px;top:1018px;width:1px;height:4px;background:#000"></div>
<div style="position:absolute;left:490.5px;top:1021px;font-size:10.8px;line-height:12.8px;color:#2f3d38;white-space:nowrap;">20:11</div>
<div style="position:absolute;left:595px;top:1018px;width:1px;height:4px;background:#000"></div>
<div style="position:absolute;left:582.5px;top:1021px;font-size:10.8px;line-height:12.8px;color:#2f3d38;white-space:nowrap;">20:11:30</div>
<div style="position:absolute;left:686px;top:1018px;width:1px;height:4px;background:#000"></div>
<div style="position:absolute;left:673.5px;top:1021px;font-size:10.8px;line-height:12.8px;color:#2f3d38;white-space:nowrap;">20:12</div>
<div style="position:absolute;left:778px;top:1018px;width:1px;height:4px;background:#000"></div>
<div style="position:absolute;left:765.5px;top:1021px;font-size:10.8px;line-height:12.8px;color:#2f3d38;white-space:nowrap;">20:12:30</div>
<div style="position:absolute;left:869px;top:1018px;width:1px;height:4px;background:#000"></div>
<div style="position:absolute;left:856.5px;top:1021px;font-size:10.8px;line-height:12.8px;color:#2f3d38;white-space:nowrap;">20:13</div>
<div style="position:absolute;left:961px;top:1018px;width:1px;height:4px;background:#000"></div>
<div style="position:absolute;left:948.5px;top:1021px;font-size:10.8px;line-height:12.8px;color:#2f3d38;white-space:nowrap;">20:13:30</div>
<div style="position:absolute;left:1053px;top:1018px;width:1px;height:4px;background:#000"></div>
<div style="position:absolute;left:1040.5px;top:1021px;font-size:10.8px;line-height:12.8px;color:#2f3d38;white-space:nowrap;">20:14</div>
<div style="position:absolute;left:1144px;top:1018px;width:1px;height:4px;background:#000"></div>
<div style="position:absolute;left:1131.5px;top:1021px;font-size:10.8px;line-height:12.8px;color:#2f3d38;white-space:nowrap;">20:14:30</div>
<div style="position:absolute;left:1236px;top:1018px;width:1px;height:4px;background:#000"></div>
<div style="position:absolute;left:1223.5px;top:1021px;font-size:10.8px;line-height:12.8px;color:#2f3d38;white-space:nowrap;">20:15</div>
<div style="position:absolute;left:1327px;top:1018px;width:1px;height:4px;background:#000"></div>
<div style="position:absolute;left:1314.5px;top:1021px;font-size:10.8px;line-height:12.8px;color:#2f3d38;white-space:nowrap;">20:15:30</div>
<div style="position:absolute;left:1419px;top:1018px;width:1px;height:4px;background:#000"></div>
<div style="position:absolute;left:1406.5px;top:1021px;font-size:10.8px;line-height:12.8px;color:#2f3d38;white-space:nowrap;">20:16</div>
<div style="position:absolute;left:1511px;top:1018px;width:1px;height:4px;background:#000"></div>
<div style="position:absolute;left:1498.5px;top:1021px;font-size:10.8px;line-height:12.8px;color:#2f3d38;white-space:nowrap;">20:16:30</div>
<div style="position:absolute;left:1602px;top:1018px;width:1px;height:4px;background:#000"></div>
<div style="position:absolute;left:1589.5px;top:1021px;font-size:10.8px;line-height:12.8px;color:#2f3d38;white-space:nowrap;">20:17</div>
<div style="position:absolute;left:1694px;top:1018px;width:1px;height:4px;background:#000"></div>
<div style="position:absolute;left:1681.5px;top:1021px;font-size:10.8px;line-height:12.8px;color:#2f3d38;white-space:nowrap;">20:17:30</div>
<div style="position:absolute;left:1785px;top:1018px;width:1px;height:4px;background:#000"></div>
<div style="position:absolute;left:1772.5px;top:1021px;font-size:10.8px;line-height:12.8px;color:#2f3d38;white-space:nowrap;">20:18</div>
<div style="position:absolute;left:0px;top:1040px;width:1920px;height:40px;background:#000"></div>
<svg style="position:absolute;left:0;top:0" width="1920" height="1080">
<line x1="32" y1="603.5" x2="1862" y2="603.5" stroke="#444" stroke-width="1" stroke-dasharray="4 5"/>
<path d="M32 605 H33 V603 H48 V601.25 H123.5 V602.5 H154 V603.25 H201.75 V602 H215.5 V603.25 H230.5 V604.25 H276 V606.25 H291.75 V608.25 H307.5 V607 H398 V609.25 H413.75 V610 H444 V612 H460.5 V611.25 H475.5 V612 H520 V613.25 H582.5 V612.5 H596.25 V613.25 H613.75 V612.5 H720 V611.75 H782 V610.5 H797 V609.25 H856.25 V610 H887.5 V609.25 H902.5 V610.5 H948.75 V609.5 H964.25 V592 H964.25 M1222.5 592 V612.5 H1237.5 V613.25 H1269.5 V612.5 H1285 V611.25 H1345.5 V610.5 H1362 V609.25 H1451.25 V610 H1483.75 V609.25 H1512.5 V610.5 H1527.5 V611.25 H1588.75 V612 H1604.5 V613.25 H1650 V612.5 H1666.25 V611.5 H1681.6 V610.4 H1696.25 V609.4 H1727.5 V608.5 H1742.5 V606.25 H1773.5 V604.4 H1802.5 V605.4 H1818.5 V604.4 H1834.4 V602.5 H1849.4 V600.4 H1862.75" fill="none" stroke="#5e1010" stroke-width="1.3"/>
<path d="M32 980 H33.3 V951.7 H47.5 V976.7 H62.5 V978.8 H78.3 V978 H93.3 V980 H124.5 V976.7 H139.5 V980 H155.3 V961.7 H169.5 V976.7 H185.3 V966.7 H200.3 V978.8 H216 V979 H231.7 V968.7 H245.8 V971.7 H261.7 V976.7 H277.5 V974.7 H291.7 V978.8 H307.5 V973.8 H322.5 V975 H337.5 V976.7 H352.5 V978.8 H369.5 V975.5 H384.7 V973.8 H399.5 V971.3 H413.3 V978 H429.7 V978.8 H460.5 V976.7 H474.7 V978.8 H491.3 V974.7 H505.5 V978 H535.3 V978.8 H567.5 V972.8 H581.3 V978.8 H613.3 V972.8 H627.5 V978.8 H643.7 V977.7 H659.5 V972.8 H673.7 V978.8 H689.7 V978 H703.7 V978.8 H720.5 V972.8 H734.7 V975.8 H750.5 V969.7 H764.7 V974.7 H781.7 V968.7 H795.5 V978.8 H811.3 V972.8 H825.5 V978.8 H842.5 V978 H857.5 V976.3 H872.5 V970.5 H886.7 V978.8 H903.7 V978 H917.5 V978.8 H933.3 V973.8 H948.7 V968.7 H964.4 V626 H978.3 V973.8 H993.8 V978 H1040.5 V974.7 H1054.7 V978 H1071.3 V972.8 H1085.5 V974.7 H1100.5 V978 H1131.7 V978.8 H1147.5 V978 H1162.5 V972.8 H1176.7 V974.7 H1192.5 V978 H1208.3 V973.8 H1222.5 V978 H1237.5 V978.8 H1254.2 V976.7 H1269.5 V966.7 H1283.7 V976.7 H1299.5 V972.8 H1314.7 V976.7 H1329.5 V978.8 H1345.5 V963.8 H1360.5 V972.8 H1375.5 V976.7 H1391.7 V973.8 H1405.5 V976.7 H1421.7 V978 H1437.5 V975.8 H1451.7 V978 H1467.5 V974.7 H1483.7 V970.8 H1497.5 V973.8 H1544 M1574 976.7 H1588.7 V978 H1605.5 V976.7 H1620.5 V972.8 H1635.5 V966.7 H1649.7 V978 H1666.7 V965.8 H1680.3 V978.8 H1696.7 V971.3 H1711.3 V976.7 H1727.5 V958.7 H1741.3 V978.8 H1773.3 V959.7 H1787.5 V970.8 H1802.2 V974.7 H1817.8 V978.8 H1834.5 V953.7 H1848.3 V976.7 H1862.5" fill="none" stroke="#140c0c" stroke-width="1.9"/>
</svg>
<div style="position:absolute;left:924.5px;top:595px;font-size:10.1px;line-height:12.1px;color:#7a1c1c;white-space:nowrap;">Jitter (ms)</div>
<div style="position:absolute;left:1416px;top:1040px;width:380px;height:40px;overflow:hidden"><div style="position:absolute;left:1.7000000000000455px;top:-16.5px;font-size:40px;line-height:40px;font-weight:bold;color:#242424;font-family:'Liberation Serif',serif">W</div><div style="position:absolute;left:58px;top:-16.5px;font-size:40px;line-height:40px;font-weight:bold;color:#242424;font-family:'Liberation Serif',serif">I</div><div style="position:absolute;left:89px;top:-16.5px;font-size:40px;line-height:40px;font-weight:bold;color:#242424;font-family:'Liberation Serif',serif">L</div><div style="position:absolute;left:130px;top:-16.5px;font-size:40px;line-height:40px;font-weight:bold;color:#242424;font-family:'Liberation Serif',serif">D</div><div style="position:absolute;left:197.5px;top:-16.5px;font-size:40px;line-height:40px;font-weight:bold;color:#242424;font-family:'Liberation Serif',serif">H</div><div style="position:absolute;left:245px;top:-16.5px;font-size:40px;line-height:40px;font-weight:bold;color:#242424;font-family:'Liberation Serif',serif">U</div><div style="position:absolute;left:292px;top:-16.5px;font-size:40px;line-height:40px;font-weight:bold;color:#242424;font-family:'Liberation Serif',serif">N</div><div style="position:absolute;left:336px;top:-16.5px;font-size:40px;line-height:40px;font-weight:bold;color:#242424;font-family:'Liberation Serif',serif">T</div></div>
<div style="position:absolute;left:0px;top:1040px;width:1920px;height:0px;"></div>
<svg style="position:absolute;left:15px;top:1051px" width="18" height="18" viewBox="0 0 18 18">
<path d="M0.5 2.5 L7.5 1.5 V8.5 H0.5 Z M8.5 1.3 L17 0 V8.5 H8.5 Z M0.5 9.5 H7.5 V16.5 L0.5 15.5 Z M8.5 9.5 H17 V18 L8.5 16.7 Z" fill="#fff"/></svg>
<svg style="position:absolute;left:63px;top:1051px" width="19" height="18" viewBox="0 0 19 18">
<circle cx="12" cy="6.5" r="5.6" fill="none" stroke="#fff" stroke-width="1.3"/><path d="M8 10.5 L1 17.3" stroke="#fff" stroke-width="1.5"/></svg>
<svg style="position:absolute;left:109px;top:1052px" width="22" height="16" viewBox="0 0 22 16">
<rect x="4.5" y="0.7" width="13" height="14.6" fill="none" stroke="#fff" stroke-width="1.3"/>
<path d="M2.5 3 H0.7 V13 H2.5 M19.5 3 H21.3 V13 H19.5" fill="none" stroke="#fff" stroke-width="1.2"/></svg>
<svg style="position:absolute;left:160px;top:1051px" width="22" height="18" viewBox="0 0 22 18">
<path d="M0 1 H8 L10 3 H21.5 V17.5 H0 Z" fill="#f8d775"/><rect x="0" y="4" width="21.5" height="13.5" fill="#fbe29a"/>
<path d="M4 17.5 V10 H17.5 V17.5 H13.5 V13.5 H8 V17.5 Z" fill="#2c9fe0"/></svg>
<svg style="position:absolute;left:207px;top:1047px" width="26" height="26" viewBox="0 0 26 26">
<circle cx="12.5" cy="13.5" r="11" fill="#0c1a2a" stroke="#1e9be8" stroke-width="2"/>
<path d="M16.5 9 A5.5 5.5 0 1 0 16.5 18" fill="none" stroke="#2aa8f0" stroke-width="3"/>
<circle cx="20" cy="5.5" r="4.5" fill="#3ab0f5"/><path d="M18 5.5 Q20 8 22 5.5" stroke="#fff" stroke-width="1" fill="none"/></svg>
<svg style="position:absolute;left:258px;top:1049px" width="22" height="22" viewBox="0 0 22 22">
<circle cx="11" cy="11" r="10.8" fill="#db4437"/>
<path d="M11 11 L1.6 16.4 A10.8 10.8 0 0 0 11 21.8 Z" fill="#0f9d58"/><path d="M11 11 L1.6 16.4 A10.8 10.8 0 0 1 1.64 5.6 Z" fill="#0f9d58"/>
<path d="M11 11 L20.4 5.6 A10.8 10.8 0 0 1 11 21.8 Z" fill="#ffcd40"/>
<circle cx="11" cy="11" r="5" fill="#fff"/><circle cx="11" cy="11" r="3.9" fill="#4285f4"/></svg>
<svg style="position:absolute;left:306px;top:1048px" width="24" height="24" viewBox="0 0 24 24">
<circle cx="12" cy="12" r="10.3" fill="#120404" stroke="#d62b2b" stroke-width="1.7"/>
<circle cx="11" cy="12.5" r="4.6" fill="none" stroke="#e03131" stroke-width="2.6" stroke-dasharray="2.4 1.2"/>
<circle cx="11" cy="12.5" r="2.2" fill="none" stroke="#e03131" stroke-width="1.4"/>
<path d="M12.5 10 L17.5 5.5 M14.5 5 H18 V8.5" fill="none" stroke="#e03131" stroke-width="2"/></svg>
<svg style="position:absolute;left:354px;top:1050px" width="24" height="20" viewBox="0 0 24 20">
<rect x="0.6" y="0.6" width="22.5" height="18.5" fill="#0a0a0a" stroke="#c8c8c8" stroke-width="1.2"/><rect x="0.6" y="0.6" width="22.5" height="2.5" fill="#c8c8c8"/>
<text x="3" y="10" font-size="6" fill="#ddd" font-family="Liberation Mono">C:\</text><rect x="12" y="9" width="7" height="1.2" fill="#ddd"/></svg>
<svg style="position:absolute;left:403px;top:1048px" width="26" height="24" viewBox="0 0 26 24">
<path d="M2 14 C0 6 10 2 17 6 C20 8 18 11 15 11 C13 11 13 14 15 15 C17 17 12 21 7 20 C4 19 2.5 17 2 14 Z" fill="#c9e1f2" stroke="#8ab4d4" stroke-width="0.6"/>
<circle cx="6" cy="13" r="1.6" fill="#e53"/><circle cx="8" cy="8.5" r="1.5" fill="#5b5"/><circle cx="12" cy="7" r="1.5" fill="#eb3"/><circle cx="9.5" cy="15.5" r="1.4" fill="#223"/>
<path d="M24 1 L15 20" stroke="#d28b3a" stroke-width="2.2"/><path d="M22.5 0.5 L25.5 2 L23.5 5 Z" fill="#f0c070"/></svg>
<svg style="position:absolute;left:452px;top:1048px" width="25" height="24" viewBox="0 0 25 24">
<rect x="0" y="0" width="25" height="24" rx="3" fill="#1b8fd6"/>
<rect x="0" y="3" width="7" height="2.2" fill="#e8502f"/><rect x="0" y="5.2" width="6" height="2.2" fill="#f4c430"/><rect x="0" y="7.4" width="5" height="2.2" fill="#6fbf4a"/><rect x="0" y="9.6" width="4" height="2.2" fill="#1b8fd6"/>
<circle cx="16" cy="8" r="5" fill="#fff"/><path d="M5 24 L10 12 L13 17 C16 19 19 18 22 15 C20 21 15 22 11 20 L9 24 Z" fill="#fff"/></svg>
<svg style="position:absolute;left:502px;top:1048px" width="23" height="23" viewBox="0 0 23 23">
<circle cx="11.5" cy="11.5" r="11" fill="#1b3f78"/><circle cx="11.5" cy="11.5" r="11" fill="url(#stg)"/>
<defs><radialGradient id="stg" cx="0.5" cy="0.3" r="0.7"><stop offset="0" stop-color="#2a66b0"/><stop offset="1" stop-color="#0f2550"/></radialGradient></defs>
<circle cx="14" cy="8.5" r="3.6" fill="none" stroke="#e8eef5" stroke-width="1.6"/><path d="M1 12 L9 16 M6 17 a2.5 2.5 0 1 0 5 0" stroke="#e8eef5" stroke-width="2.4" fill="none"/></svg>
<svg style="position:absolute;left:550px;top:1048px" width="25" height="24" viewBox="0 0 25 24">
<rect width="25" height="24" fill="#e4e4e4"/>
<path d="M0 0 H14 C8 2 4 7 3 13 C2.5 17 3 21 4 24 H0 Z" fill="#2a2a2a"/>
<path d="M14 0 H25 V5 C20 2 16 2 12 4 Z" fill="#555"/>
<path d="M5 5 C9 1 17 1 21 6" fill="none" stroke="#333" stroke-width="1.5"/>
<path d="M8 9 C12 7 17 8 19 11 M9 13 L12 12.5 M15 12.5 L18 13.5 M12 17 L15 17.5 M10 21 C13 23 17 22 19 19 M20 8 C23 12 23 18 20 22" fill="none" stroke="#222" stroke-width="1.1"/>
<circle cx="21" cy="16" r="2.2" fill="none" stroke="#444" stroke-width="1"/>
<path d="M3 8 L7 20 M1 14 L5 22" stroke="#777" stroke-width="0.8"/>
</svg>
<div style="position:absolute;left:249px;top:1078px;width:40px;height:2px;background:#7db8e8"></div>
<div style="position:absolute;left:346px;top:1078px;width:40px;height:2px;background:#7db8e8"></div>
<div style="position:absolute;left:396px;top:1078px;width:40px;height:2px;background:#7db8e8"></div>
<div style="position:absolute;left:445px;top:1078px;width:40px;height:2px;background:#7db8e8"></div>
<div style="position:absolute;left:494px;top:1078px;width:40px;height:2px;background:#7db8e8"></div>
<div style="position:absolute;left:543px;top:1078px;width:40px;height:2px;background:#7db8e8"></div>
<svg style="position:absolute;left:1734px;top:1055px" width="15" height="9" viewBox="0 0 15 9"><path d="M1 8 L7.5 1.5 L14 8" fill="none" stroke="#fff" stroke-width="1.2"/></svg>
<svg style="position:absolute;left:1756px;top:1053px" width="18" height="15" viewBox="0 0 18 15">
<path d="M5 1.5 H16.5 V10.5 H3.5 V14" fill="none" stroke="#fff" stroke-width="1"/><path d="M10 10.5 V13.5 M3.5 13.5 H13" stroke="#fff" stroke-width="1"/>
<rect x="1.5" y="1" width="4.5" height="4" fill="#000" stroke="#fff" stroke-width="1"/><path d="M2.5 2.5 L3.7 4 L5 2.5" fill="none" stroke="#fff" stroke-width="0.7"/></svg>
<svg style="position:absolute;left:1780px;top:1053px" width="18" height="15" viewBox="0 0 18 15">
<path d="M1.5 5 H3.5 L6.5 1.8 V12.8 L3.5 9.6 H1.5 Z" fill="none" stroke="#fff" stroke-width="1"/>
<path d="M10.5 5 Q12 7.5 10.5 10 M12.5 3.5 Q15 7.5 12.5 11.5 M14.5 2 Q18 7.5 14.5 13" fill="none" stroke="#aaa" stroke-width="1"/></svg>
<div style="position:absolute;left:1633px;width:400px;top:1045px;font-size:10.6px;line-height:12.6px;color:#fff;white-space:nowrap;text-align:center;">20:21</div>
<div style="position:absolute;left:1634px;width:400px;top:1063px;font-size:10.7px;line-height:12.7px;color:#fff;white-space:nowrap;text-align:center;">27.06.2017</div>
<svg style="position:absolute;left:1879px;top:1052px" width="17" height="16" viewBox="0 0 17 16">
<path d="M0.5 0.5 H16 V12 H11 L8.3 15 L5.5 12 H0.5 Z" fill="none" stroke="#fff" stroke-width="1"/></svg>
<div style="position:absolute;left:1915px;top:1040px;width:1px;height:40px;background:#444"></div>
<div style="position:absolute;left:1919px;top:107px;width:1px;height:933px;background:#dadada"></div>
</body></html>
